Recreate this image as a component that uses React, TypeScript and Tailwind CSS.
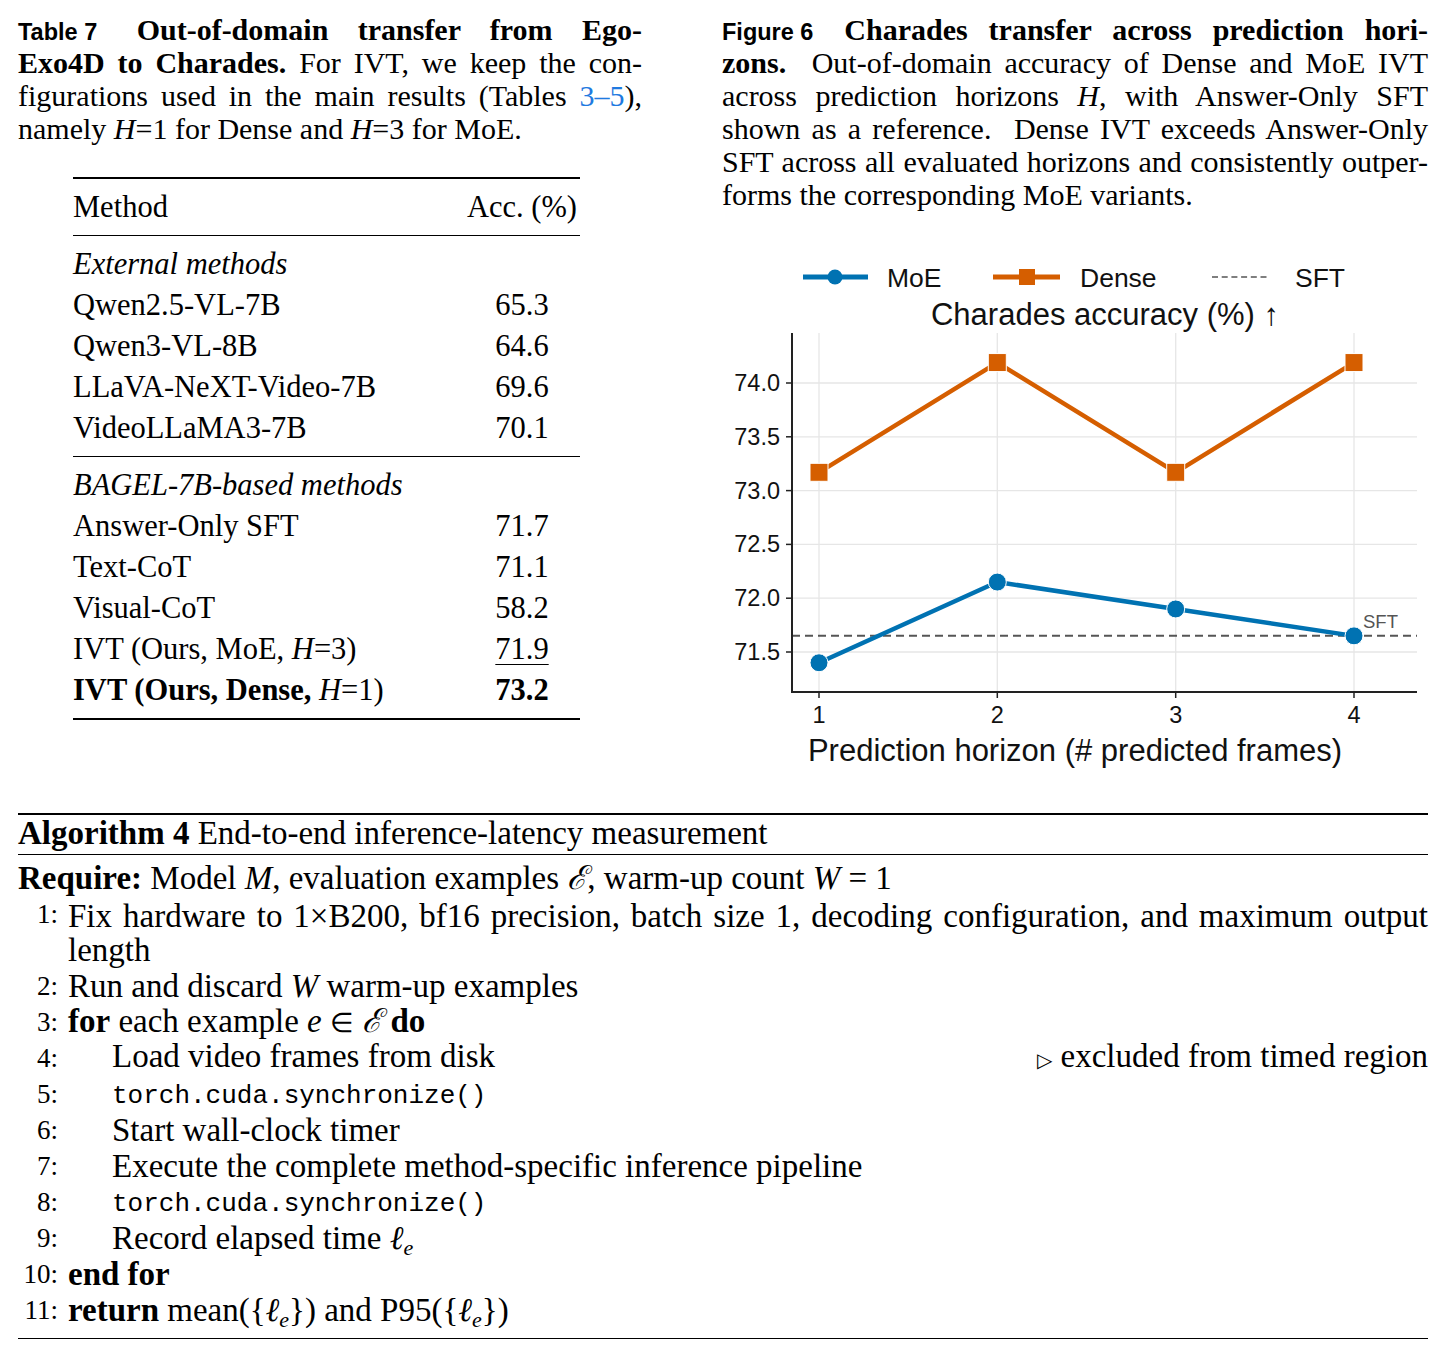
import type { ReactNode } from "react";

const xs = [819, 997.3, 1175.7, 1354];
const yOf = (v: number) => 383 - (v - 74) * 107.6;
const dense = [73.17, 74.19, 73.17, 74.19];
const moe = [71.4, 72.15, 71.9, 71.65];
const yTicks = [74.0, 73.5, 73.0, 72.5, 72.0, 71.5];
const BLUE = "#0072B2";
const ORANGE = "#D55E00";

function Just({ children }: { children: ReactNode }) {
  return <div className="h-[33px] whitespace-nowrap text-justify [text-align-last:justify]">{children}</div>;
}

function Label({ children }: { children: ReactNode }) {
  return (
    <span className="mr-[10px] inline-block whitespace-nowrap font-['Liberation_Sans',Arial,sans-serif] text-[23.5px] leading-none font-bold">
      {children}
    </span>
  );
}

function Chart() {
  const sft = yOf(71.65);
  return (
    <svg
      width={706}
      height={540}
      viewBox="722 240 706 540"
      className="mt-[29px] block"
      fontFamily="'Liberation Sans', Arial, sans-serif"
    >
      {/* legend */}
      <line x1={803} y1={277} x2={868} y2={277} stroke={BLUE} strokeWidth={5} />
      <circle cx={835} cy={277} r={7.5} fill={BLUE} />
      <text x={887} y={286.5} fontSize={26.5} fill="#111">MoE</text>
      <line x1={993} y1={277} x2={1060} y2={277} stroke={ORANGE} strokeWidth={5} />
      <rect x={1019} y={269} width={16} height={16} fill={ORANGE} />
      <text x={1080} y={286.5} fontSize={26.5} fill="#111">Dense</text>
      <line x1={1212} y1={277} x2={1270} y2={277} stroke="#555" strokeWidth={1.6} strokeDasharray="6 3.7" />
      <text x={1295} y={286.5} fontSize={26.5} fill="#111">SFT</text>

      <text x={1105} y={325} fontSize={31} textAnchor="middle" fill="#111">
        Charades accuracy (%) ↑
      </text>

      {/* grid */}
      {yTicks.map((t) => (
        <line key={t} x1={792} x2={1417} y1={yOf(t)} y2={yOf(t)} stroke="#e6e6e6" strokeWidth={1.3} />
      ))}
      {xs.map((x) => (
        <line key={x} x1={x} x2={x} y1={333} y2={692} stroke="#e6e6e6" strokeWidth={1.3} />
      ))}

      {/* sft reference */}
      <line x1={792} x2={1417} y1={sft} y2={sft} stroke="#555" strokeWidth={2} strokeDasharray="8 5" />
      <text x={1363} y={627.5} fontSize={18.5} fill="#555">SFT</text>

      {/* series */}
      <polyline
        points={dense.map((v, i) => `${xs[i]},${yOf(v)}`).join(" ")}
        fill="none"
        stroke={ORANGE}
        strokeWidth={4.5}
        strokeLinejoin="round"
      />
      {dense.map((v, i) => (
        <rect
          key={i}
          x={xs[i] - 9}
          y={yOf(v) - 9}
          width={18}
          height={18}
          fill={ORANGE}
          stroke="#fff"
          strokeWidth={1}
        />
      ))}
      <polyline
        points={moe.map((v, i) => `${xs[i]},${yOf(v)}`).join(" ")}
        fill="none"
        stroke={BLUE}
        strokeWidth={4.5}
        strokeLinejoin="round"
      />
      {moe.map((v, i) => (
        <circle key={i} cx={xs[i]} cy={yOf(v)} r={9} fill={BLUE} stroke="#fff" strokeWidth={1} />
      ))}

      {/* axes */}
      <line x1={792} x2={792} y1={333} y2={693} stroke="#222" strokeWidth={2} />
      <line x1={791} x2={1417} y1={692} y2={692} stroke="#222" strokeWidth={2} />
      {yTicks.map((t) => (
        <g key={t}>
          <line x1={786} x2={792} y1={yOf(t)} y2={yOf(t)} stroke="#222" strokeWidth={1.5} />
          <text x={780} y={yOf(t) + 8} fontSize={23.5} textAnchor="end" fill="#111">
            {t.toFixed(1)}
          </text>
        </g>
      ))}
      {xs.map((x, i) => (
        <g key={x}>
          <line x1={x} x2={x} y1={692} y2={698} stroke="#222" strokeWidth={1.5} />
          <text x={x} y={722.5} fontSize={23.5} textAnchor="middle" fill="#111">
            {i + 1}
          </text>
        </g>
      ))}
      <text x={1075} y={761} fontSize={31} textAnchor="middle" fill="#111">
        Prediction horizon (# predicted frames)
      </text>
    </svg>
  );
}

const external = [
  ["Qwen2.5-VL-7B", "65.3"],
  ["Qwen3-VL-8B", "64.6"],
  ["LLaVA-NeXT-Video-7B", "69.6"],
  ["VideoLLaMA3-7B", "70.1"],
];

function Row({ name, acc }: { name: ReactNode; acc: ReactNode }) {
  return (
    <div className="flex h-[41px] items-center leading-[41px]">
      <div className="flex-1">{name}</div>
      <div className="w-[116px] text-center">{acc}</div>
    </div>
  );
}

function Num({ children, indent = false }: { children: ReactNode; indent?: boolean }) {
  return (
    <div className="flex h-[36px] items-center leading-[36px]">
      <div className="w-[40px] text-right text-[27px]">{children}</div>
      <div className={indent ? "w-[54px]" : "w-[10px]"} />
    </div>
  );
}

function Line({ n, indent = false, children }: { n: string; indent?: boolean; children: ReactNode }) {
  return (
    <div className="flex h-[36px] items-center leading-[36px] whitespace-nowrap">
      <Num indent={indent}>{n}</Num>
      <div className="flex-1">{children}</div>
    </div>
  );
}

const mono = "font-['Liberation_Mono',monospace] text-[26px]";

function Ell() {
  return (
    <span>
      <i>ℓ</i>
      <sub className="text-[22px] italic">e</sub>
    </span>
  );
}

export default function App() {
  return (
    <div className="h-[1356px] w-[1451px] bg-white pl-[18px] pr-[23px] pt-[13px] font-['Liberation_Serif','Times_New_Roman',serif] text-black">
      <div className="flex gap-[80px]">
        {/* left column */}
        <div className="w-[624px]">
          <div className="text-[30px] leading-[33px]">
            <Just>
              <Label>Table 7</Label> <b>Out-of-domain transfer from Ego-</b>
            </Just>
            <Just>
              <b>Exo4D to Charades.</b> For IVT, we keep the con-
            </Just>
            <Just>
              figurations used in the main results (Tables <span className="text-[#1f7ae0]">3–5</span>),
            </Just>
            <div className="h-[33px]">
              namely <i>H</i>=1 for Dense and <i>H</i>=3 for MoE.
            </div>
          </div>

          <div className="ml-[55px] mt-[32px] w-[507px] text-[30.5px]">
            <div className="border-t-2 border-black" />
            <div className="pb-[7px] pt-[8px]">
              <Row name="Method" acc="Acc. (%)" />
            </div>
            <div className="border-t border-black" />
            <div className="pb-[7px] pt-[8px]">
              <Row name={<i>External methods</i>} acc="" />
              {external.map(([n, a]) => (
                <Row key={n} name={n} acc={a} />
              ))}
            </div>
            <div className="border-t border-black" />
            <div className="pb-[7px] pt-[8px]">
              <Row name={<i>BAGEL-7B-based methods</i>} acc="" />
              <Row name="Answer-Only SFT" acc="71.7" />
              <Row name="Text-CoT" acc="71.1" />
              <Row name="Visual-CoT" acc="58.2" />
              <Row
                name={
                  <>
                    IVT (Ours, MoE, <i>H</i>=3)
                  </>
                }
                acc={<span className="underline decoration-1 underline-offset-[5px]">71.9</span>}
              />
              <Row
                name={
                  <>
                    <b>IVT (Ours, Dense,</b> <i>H</i>=1)
                  </>
                }
                acc={<b>73.2</b>}
              />
            </div>
            <div className="border-t-2 border-black" />
          </div>
        </div>

        {/* right column */}
        <div className="w-[706px]">
          <div className="text-[30px] leading-[33px]">
            <Just>
              <Label>Figure 6</Label> <b>Charades transfer across prediction hori-</b>
            </Just>
            <Just>
              <b>zons.</b>&nbsp; Out-of-domain accuracy of Dense and MoE IVT
            </Just>
            <Just>
              across prediction horizons <i>H</i>, with Answer-Only SFT
            </Just>
            <Just>shown as a reference.&nbsp; Dense IVT exceeds Answer-Only</Just>
            <Just>SFT across all evaluated horizons and consistently outper-</Just>
            <div className="h-[33px]">forms the corresponding MoE variants.</div>
          </div>
          <Chart />
        </div>
      </div>

      {/* algorithm */}
      <div className="mt-[33px] border-t-2 border-black text-[33px]">
        <div className="h-[36px] leading-[36px]">
          <b>Algorithm 4</b> End-to-end inference-latency measurement
        </div>
        <div className="mt-[3px] border-t border-black" />
        <div className="pb-[10px] pt-[5px]">
          <div className="h-[36px] leading-[36px]">
            <b>Require:</b> Model <i>M</i>, evaluation examples <i>ℰ</i>, warm-up count <i>W</i> = 1
          </div>
          <div className="flex h-[36px] items-center leading-[36px]">
            <Num>1:</Num>
            <div className="flex-1">
              <Just>
                Fix hardware to 1×B200, bf16 precision, batch size 1, decoding configuration, and maximum output
              </Just>
            </div>
          </div>
          <div className="h-[36px] pl-[50px] leading-[36px]">length</div>
          <Line n="2:">
            Run and discard <i>W</i> warm-up examples
          </Line>
          <Line n="3:">
            <b>for</b> each example <i>e</i> <span className="text-[27px]">∈</span> <i>ℰ</i> <b>do</b>
          </Line>
          <Line n="4:" indent>
            <div className="flex justify-between">
              <span>Load video frames from disk</span>
              <span>
                <span className="text-[20px]">▷</span> excluded from timed region
              </span>
            </div>
          </Line>
          <Line n="5:" indent>
            <span className={mono}>torch.cuda.synchronize()</span>
          </Line>
          <Line n="6:" indent>
            Start wall-clock timer
          </Line>
          <Line n="7:" indent>
            Execute the complete method-specific inference pipeline
          </Line>
          <Line n="8:" indent>
            <span className={mono}>torch.cuda.synchronize()</span>
          </Line>
          <Line n="9:" indent>
            Record elapsed time <Ell />
          </Line>
          <Line n="10:">
            <b>end for</b>
          </Line>
          <Line n="11:">
            <b>return</b> mean({"{"}
            <Ell />
            {"}"}) and P95({"{"}
            <Ell />
            {"}"})
          </Line>
        </div>
        <div className="border-t border-black" />
      </div>
    </div>
  );
}
